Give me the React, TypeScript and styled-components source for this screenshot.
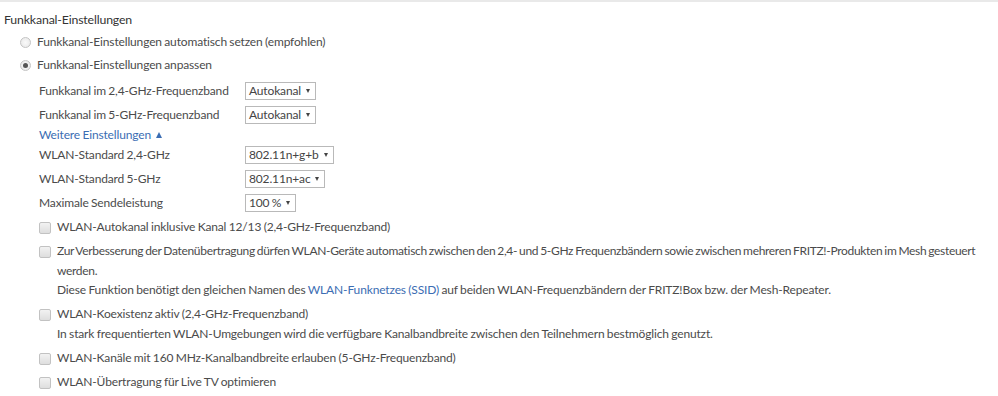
import React from "react";
import styled, { createGlobalStyle } from "styled-components";

const GlobalStyle = createGlobalStyle`
  html, body { margin: 0; padding: 0; background: #fff; }
  body {
    font-family: Lato, "Open Sans", "Liberation Sans", sans-serif;
    font-size: 12px;
    letter-spacing: -0.15px;
    word-spacing: -0.5px;
    color: #4b4b4b;
  }
`;

const Page = styled.div`
  width: 998px;
  height: 396px;
  border-top: 2px solid #e9e9e9;
  box-sizing: border-box;
  padding: 8px 0 0 4px;
  overflow: hidden;
`;

const Heading = styled.div`
  line-height: 20px;
  font-size: 12.3px;
  color: #333;
  margin-bottom: 2px;
`;

const RadioRow = styled.label`
  display: flex;
  align-items: center;
  line-height: 20px;
  margin: 0 0 3px 16px;
  gap: 6px;
`;

const RadioDot = styled.span<{ $checked?: boolean }>`
  width: 11px;
  height: 11px;
  border-radius: 50%;
  box-sizing: border-box;
  border: 1px solid #c4c4c4;
  background: radial-gradient(circle, #fafafa 0%, #e6e6e6 100%);
  display: flex;
  align-items: center;
  justify-content: center;
  &::after {
    content: "";
    display: ${(p) => (p.$checked ? "block" : "none")};
    width: 5px;
    height: 5px;
    border-radius: 50%;
    background: #555;
  }
`;

const Indented = styled.div`
  padding-left: 35px;
  padding-top: 3px;
`;

const FieldRow = styled.div<{ $gap?: number }>`
  display: grid;
  grid-template-columns: 206px auto;
  align-items: center;
  line-height: 20px;
  margin-bottom: ${(p) => (p.$gap ?? 4)}px;
`;

const Select = styled.div`
  justify-self: start;
  display: inline-flex;
  align-items: center;
  height: 18px;
  box-sizing: border-box;
  border: 1px solid #b9b9b9;
  padding: 0 5px 0 3px;
  line-height: 16px;
  color: #444;
  background: #fff;
  gap: 5px;
  &::after {
    content: "";
    width: 0;
    height: 0;
    border-left: 2.5px solid transparent;
    border-right: 2.5px solid transparent;
    border-top: 4px solid #444;
  }
`;

const MoreLink = styled.a`
  display: inline-flex;
  align-items: center;
  gap: 5px;
  line-height: 20px;
  color: #3b6db3;
  text-decoration: none;
  &::after {
    content: "";
    width: 0;
    height: 0;
    border-left: 3.5px solid transparent;
    border-right: 3.5px solid transparent;
    border-bottom: 6px solid #3b6db3;
  }
`;

const LinkRow = styled.div`
  line-height: 20px;
`;

const CheckRow = styled.div`
  display: grid;
  grid-template-columns: 18px 1fr;
  line-height: 20px;
  margin-bottom: 4px;
`;

const CheckBox = styled.span`
  width: 10px;
  height: 10px;
  margin-top: 5px;
  border: 1px solid #c2c2c2;
  border-radius: 2px;
  background: linear-gradient(#f2f2f2, #dedede);
`;

const CheckBody = styled.div``;

const Wrapped = styled.div`
  line-height: 19.5px;
  letter-spacing: -0.32px;
  word-spacing: -0.8px;
`;

const Note = styled.div`
  line-height: 20px;
`;

const InlineLink = styled.a`
  color: #3b6db3;
  text-decoration: none;
`;

const fields = [
  { label: "Funkkanal im 2,4-GHz-Frequenzband", value: "Autokanal" },
  { label: "Funkkanal im 5-GHz-Frequenzband", value: "Autokanal" },
];

const more = [
  { label: "WLAN-Standard 2,4-GHz", value: "802.11n+g+b" },
  { label: "WLAN-Standard 5-GHz", value: "802.11n+ac" },
  { label: "Maximale Sendeleistung", value: "100 %" },
];

export default function App() {
  return (
    <>
      <GlobalStyle />
      <Page>
        <Heading>Funkkanal-Einstellungen</Heading>
        <RadioRow>
          <RadioDot />
          Funkkanal-Einstellungen automatisch setzen (empfohlen)
        </RadioRow>
        <RadioRow>
          <RadioDot $checked />
          Funkkanal-Einstellungen anpassen
        </RadioRow>
        <Indented>
          {fields.map((f, i) => (
            <FieldRow key={f.label} $gap={i === fields.length - 1 ? 0 : 4}>
              <span>{f.label}</span>
              <Select>{f.value}</Select>
            </FieldRow>
          ))}
          <LinkRow>
            <MoreLink href="#">Weitere Einstellungen</MoreLink>
          </LinkRow>
          {more.map((f) => (
            <FieldRow key={f.label}>
              <span>{f.label}</span>
              <Select>{f.value}</Select>
            </FieldRow>
          ))}
          <CheckRow>
            <CheckBox />
            <CheckBody>WLAN-Autokanal inklusive Kanal 12/13 (2,4-GHz-Frequenzband)</CheckBody>
          </CheckRow>
          <CheckRow>
            <CheckBox />
            <CheckBody>
              <Wrapped>
                Zur Verbesserung der Datenübertragung dürfen WLAN-Geräte automatisch zwischen den 2,4- und 5-GHz Frequenzbändern sowie zwischen mehreren FRITZ!-Produkten im Mesh gesteuert werden.
              </Wrapped>
              <Note>
                Diese Funktion benötigt den gleichen Namen des{" "}
                <InlineLink href="#">WLAN-Funknetzes (SSID)</InlineLink> auf beiden WLAN-Frequenzbändern der FRITZ!Box bzw. der Mesh-Repeater.
              </Note>
            </CheckBody>
          </CheckRow>
          <CheckRow>
            <CheckBox />
            <CheckBody>
              WLAN-Koexistenz aktiv (2,4-GHz-Frequenzband)
              <Note>
                In stark frequentierten WLAN-Umgebungen wird die verfügbare Kanalbandbreite zwischen den Teilnehmern bestmöglich genutzt.
              </Note>
            </CheckBody>
          </CheckRow>
          <CheckRow>
            <CheckBox />
            <CheckBody>WLAN-Kanäle mit 160 MHz-Kanalbandbreite erlauben (5-GHz-Frequenzband)</CheckBody>
          </CheckRow>
          <CheckRow>
            <CheckBox />
            <CheckBody>WLAN-Übertragung für Live TV optimieren</CheckBody>
          </CheckRow>
        </Indented>
      </Page>
    </>
  );
}
